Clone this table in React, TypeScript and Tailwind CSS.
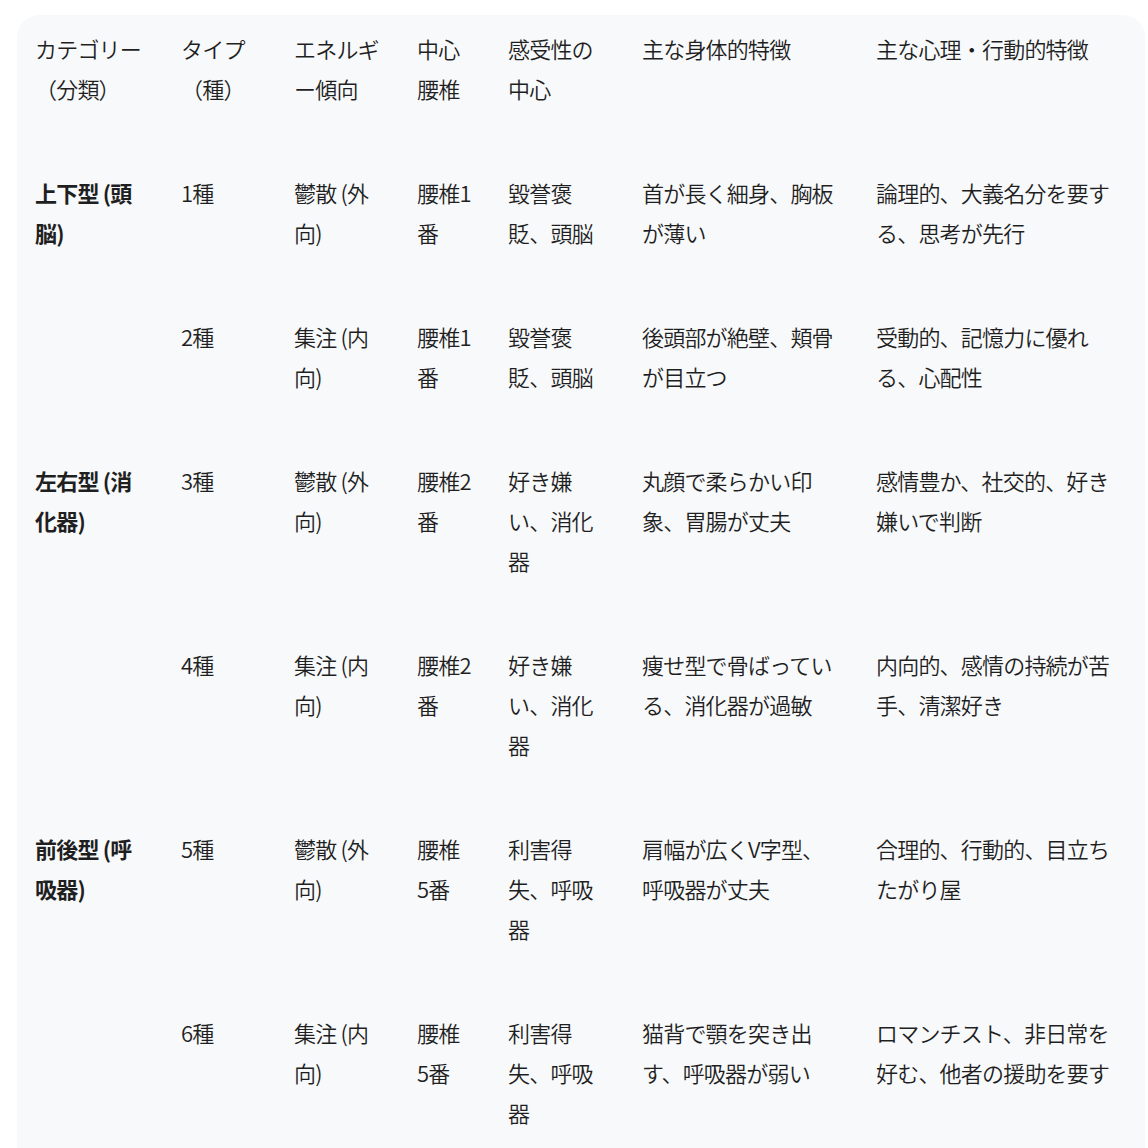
const headers: string[][] = [
  ['カテゴリー', '（分類）'],
  ['タイプ', '（種）'],
  ['エネルギ', 'ー傾向'],
  ['中心', '腰椎'],
  ['感受性の', '中心'],
  ['主な身体的特徴'],
  ['主な心理・行動的特徴'],
];

const rows: string[][][] = [
  [['上下型 (頭', '脳)'], ['1種'], ['鬱散 (外', '向)'], ['腰椎1', '番'], ['毀誉褒', '貶、頭脳'], ['首が長く細身、胸板', 'が薄い'], ['論理的、大義名分を要す', 'る、思考が先行']],
  [[], ['2種'], ['集注 (内', '向)'], ['腰椎1', '番'], ['毀誉褒', '貶、頭脳'], ['後頭部が絶壁、頬骨', 'が目立つ'], ['受動的、記憶力に優れ', 'る、心配性']],
  [['左右型 (消', '化器)'], ['3種'], ['鬱散 (外', '向)'], ['腰椎2', '番'], ['好き嫌', 'い、消化', '器'], ['丸顔で柔らかい印', '象、胃腸が丈夫'], ['感情豊か、社交的、好き', '嫌いで判断']],
  [[], ['4種'], ['集注 (内', '向)'], ['腰椎2', '番'], ['好き嫌', 'い、消化', '器'], ['痩せ型で骨ばってい', 'る、消化器が過敏'], ['内向的、感情の持続が苦', '手、清潔好き']],
  [['前後型 (呼', '吸器)'], ['5種'], ['鬱散 (外', '向)'], ['腰椎', '5番'], ['利害得', '失、呼吸', '器'], ['肩幅が広くV字型、', '呼吸器が丈夫'], ['合理的、行動的、目立ち', 'たがり屋']],
  [[], ['6種'], ['集注 (内', '向)'], ['腰椎', '5番'], ['利害得', '失、呼吸', '器'], ['猫背で顎を突き出', 'す、呼吸器が弱い'], ['ロマンチスト、非日常を', '好む、他者の援助を要す']],
];

const widths = ['w-[146px]', 'w-[113px]', 'w-[123px]', 'w-[91px]', 'w-[134px]', 'w-[234px]', 'w-[251px]'];

function Cell({ lines, bold, width }: { lines: string[]; bold?: boolean; width: string }) {
  return (
    <div className={`${width} shrink-0 pb-16 ${bold ? 'font-bold' : 'font-[350]'}`}>
      {lines.map((l, i) => (
        <div key={i} className="whitespace-nowrap">
          {l}
        </div>
      ))}
    </div>
  );
}

export default function App() {
  return (
    <div className="min-h-[1148px] bg-white pl-[17px] pt-[15px]">
      <div
        className="w-[1128px] rounded-t-[22px] bg-[#f8f9fb] pl-[18px] pt-[13px] text-[22px] leading-[40px] tracking-[-0.8px] text-[#1f1f1f]"
        style={{ fontFamily: '"Noto Sans CJK JP", "Noto Sans", sans-serif' }}
      >
        <div className="flex">
          {headers.map((h, i) => (
            <Cell key={i} lines={h} width={widths[i]} />
          ))}
        </div>
        {rows.map((r, ri) => (
          <div key={ri} className="flex">
            {r.map((c, ci) => (
              <Cell key={ci} lines={c} bold={ci === 0} width={widths[ci]} />
            ))}
          </div>
        ))}
      </div>
    </div>
  );
}
